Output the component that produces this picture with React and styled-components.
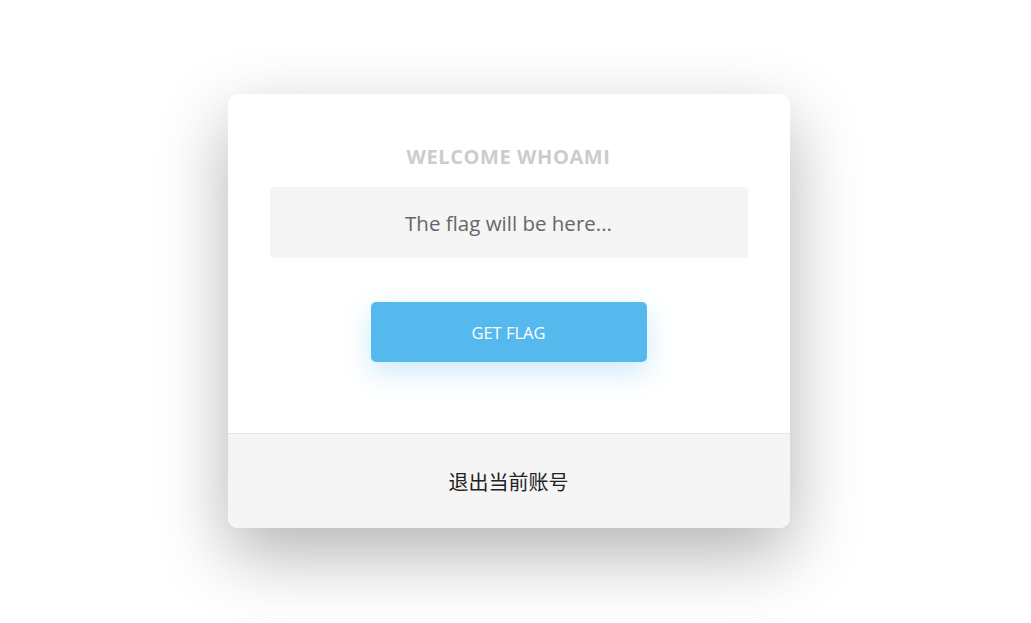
import React from "react";
import styled, { createGlobalStyle } from "styled-components";

const Global = createGlobalStyle`
  html, body {
    margin: 0;
    padding: 0;
    background: #fff;
    overflow: hidden;
    font-family: "Open Sans", "Noto Sans", "Noto Sans CJK SC", sans-serif;
  }
`;

const Page = styled.div`
  width: 1031px;
  height: 623px;
  display: flex;
  justify-content: center;
  padding: 94px 14px 0 0;
  box-sizing: border-box;
`;

const Card = styled.div`
  width: 562px;
  height: 434px;
  background: #fff;
  border-radius: 10px;
  box-shadow: 0 26px 70px rgba(0, 0, 0, 0.3);
  display: flex;
  flex-direction: column;
  overflow: hidden;
`;

const Body = styled.div`
  flex: 1;
  padding: 50px 42px 0;
  display: flex;
  flex-direction: column;
  align-items: center;
`;

const Title = styled.h2`
  margin: 0;
  font-size: 20px;
  line-height: 26px;
  letter-spacing: 0.6px;
  font-weight: 700;
  color: #cccccc;
`;

const FlagBox = styled.div`
  margin-top: 17px;
  width: 100%;
  height: 71px;
  background: #f5f5f5;
  border-radius: 4px;
  display: flex;
  align-items: center;
  justify-content: center;
  font-size: 20.5px;
  color: #666;
`;

const Button = styled.button`
  margin-top: 44px;
  width: 276px;
  height: 60px;
  border: none;
  border-radius: 5px;
  background: #56b9ed;
  color: #fff;
  font-family: inherit;
  font-size: 16.5px;
  box-shadow: 0 10px 28px rgba(86, 185, 237, 0.3);
  cursor: pointer;
`;

const Footer = styled.div`
  height: 94px;
  border-top: 1px solid #e1e6ea;
  background: #f5f5f5;
  display: flex;
  align-items: center;
  justify-content: center;
  font-size: 20px;
  color: #222;
  font-family: "Noto Sans CJK SC", sans-serif;
`;

export default function App() {
  return (
    <>
      <Global />
      <Page>
        <Card>
          <Body>
            <Title>WELCOME WHOAMI</Title>
            <FlagBox>The flag will be here...</FlagBox>
            <Button>GET FLAG</Button>
          </Body>
          <Footer>退出当前账号</Footer>
        </Card>
      </Page>
    </>
  );
}
